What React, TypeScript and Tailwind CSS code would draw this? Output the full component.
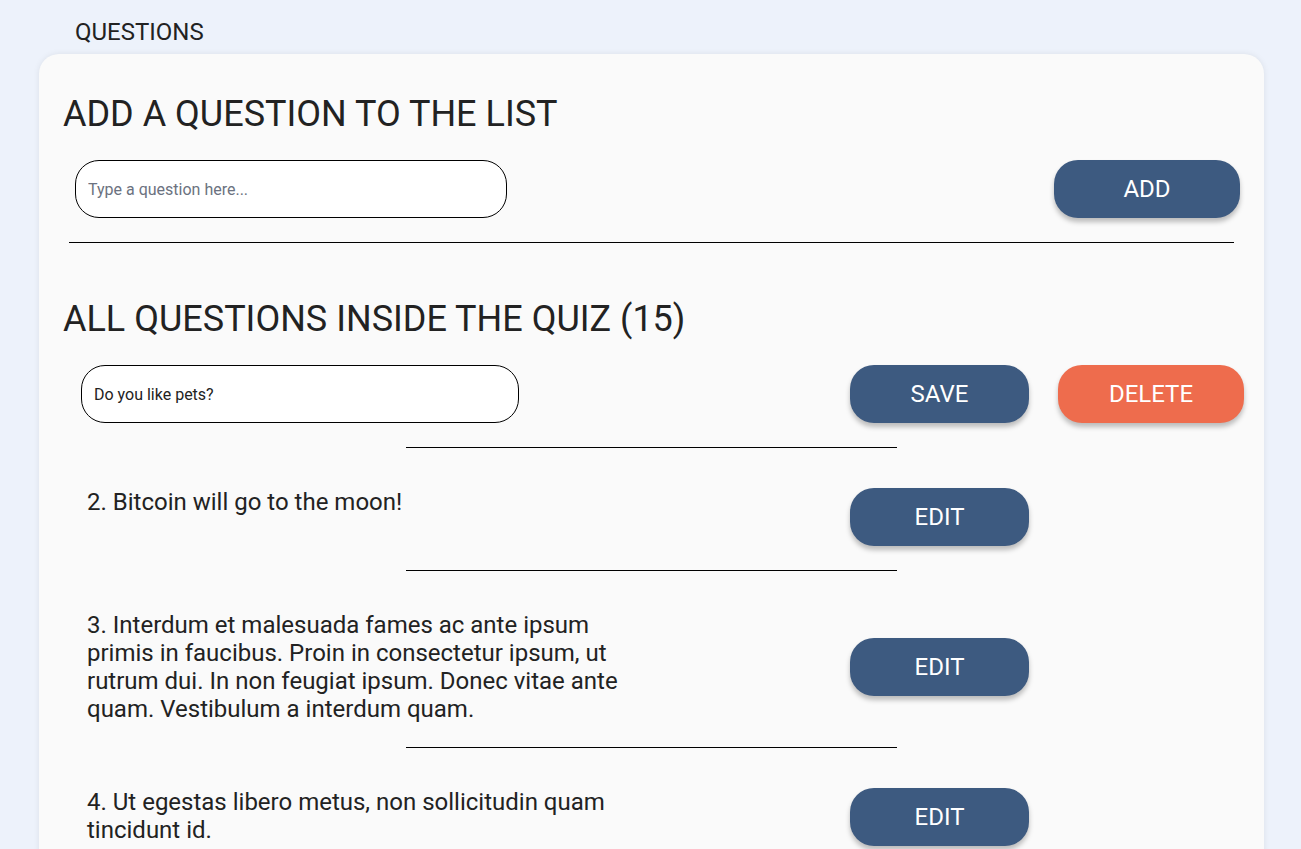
import React, { useState } from "react";

type Question = { id: number; text: string };

const initial: Question[] = [
  { id: 1, text: "Do you like pets?" },
  { id: 2, text: "Bitcoin will go to the moon!" },
  {
    id: 3,
    text: "Interdum et malesuada fames ac ante ipsum primis in faucibus. Proin in consectetur ipsum, ut rutrum dui. In non feugiat ipsum. Donec vitae ante quam. Vestibulum a interdum quam.",
  },
  { id: 4, text: "Ut egestas libero metus, non sollicitudin quam tincidunt id." },
  { id: 5, text: "Lorem ipsum dolor sit amet?" },
];

const btn =
  "h-[58px] rounded-[24px] text-white text-[24px] shadow-[0_4px_5px_rgba(0,0,0,0.25)] cursor-pointer";

export default function App() {
  const [editing, setEditing] = useState<number | null>(1);

  return (
    <div className="min-h-screen bg-[#edf2fb] pt-[16px] px-[39px] text-[#222222] font-['Roboto',sans-serif]">
      <p className="pl-[36px] text-[24px] leading-[32px]">QUESTIONS</p>
      <div className="mt-[6px] w-[1225px] rounded-[20px] bg-[#fafafa] shadow-[0_0_6px_rgba(0,0,0,0.08)] pt-[38px] pb-10">
        <h2 className="pl-6 text-[36px] leading-[44px]">ADD A QUESTION TO THE LIST</h2>
        <div className="mt-[24px] flex items-center justify-between pl-9 pr-6">
          <input
            placeholder="Type a question here..."
            className="h-[58px] w-[432px] rounded-[24px] border border-black bg-white px-3 text-[16px] outline-none placeholder:text-[#6b7280]"
          />
          <button className={`${btn} w-[186px] bg-[#3d5a80]`}>ADD</button>
        </div>
        <div className="mx-auto mt-6 h-px w-[1165px] bg-black" />

        <h2 className="mt-[54px] pl-6 text-[36px] leading-[44px]">
          ALL QUESTIONS INSIDE THE QUIZ (15)
        </h2>
        <div className="mt-[24px] flex flex-col">
          {initial.map((q, i) => (
            <div key={q.id}>
              {i > 0 && <div className="h-10" />}
              <div className="grid grid-cols-[740px_179px_186px] gap-x-[29px] items-center pl-[42px]">
                {editing === q.id ? (
                  <input
                    defaultValue={q.text}
                    className="h-[58px] w-[438px] rounded-[24px] border border-black bg-white px-3 text-[16px] outline-none"
                  />
                ) : (
                  <p className="min-h-[58px] w-[552px] pl-1.5 text-[24px] leading-[28px]">
                    {q.id}. {q.text}
                  </p>
                )}
                {editing === q.id ? (
                  <>
                    <button className={`${btn} bg-[#3d5a80]`} onClick={() => setEditing(null)}>
                      SAVE
                    </button>
                    <button className={`${btn} bg-[#ee6c4d]`}>DELETE</button>
                  </>
                ) : (
                  <button className={`${btn} bg-[#3d5a80]`} onClick={() => setEditing(q.id)}>
                    EDIT
                  </button>
                )}
              </div>
              <div className="mx-auto mt-6 h-px w-[491px] bg-black" />
            </div>
          ))}
        </div>
      </div>
    </div>
  );
}
